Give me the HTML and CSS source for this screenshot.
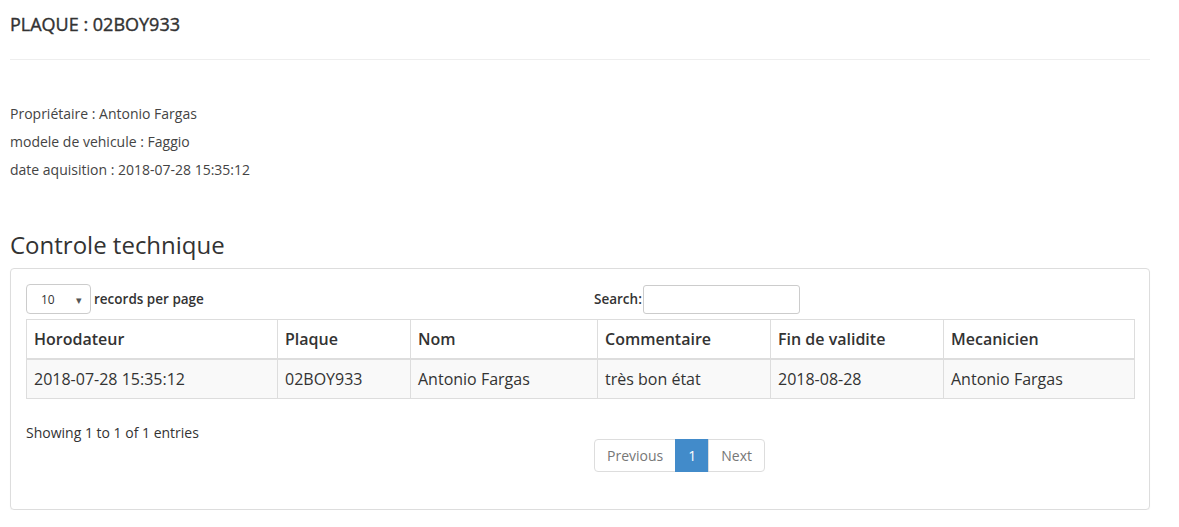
FILE: index.html
```html
<!DOCTYPE html>
<html lang="fr">
<head>
<meta charset="utf-8">
<title>Plaque 02BOY933</title>
<link rel="stylesheet" href="styles.css">
</head>
<body>
<div class="page">
  <h4 class="title">PLAQUE : 02BOY933</h4>
  <hr class="sep">
  <p class="info">Propriétaire : Antonio Fargas</p>
  <p class="info">modele de vehicule : Faggio</p>
  <p class="info">date aquisition : 2018-07-28 15:35:12</p>
  <h3 class="section">Controle technique</h3>
  <div class="panel">
    <div class="grid-row top">
      <div class="col">
        <span class="select">10<span class="caret">▾</span></span>
        <span class="lbl">records per page</span>
      </div>
      <div class="col right">
        <span class="lbl">Search:</span><span class="search"></span>
      </div>
    </div>
    <table class="data">
      <colgroup>
        <col class="c1"><col class="c2"><col class="c3"><col class="c4"><col class="c5"><col class="c6">
      </colgroup>
      <thead>
        <tr><th>Horodateur</th><th>Plaque</th><th>Nom</th><th>Commentaire</th><th>Fin de validite</th><th>Mecanicien</th></tr>
      </thead>
      <tbody>
        <tr><td>2018-07-28 15:35:12</td><td>02BOY933</td><td>Antonio Fargas</td><td>très bon état</td><td>2018-08-28</td><td>Antonio Fargas</td></tr>
      </tbody>
    </table>
    <div class="grid-row bottom">
      <div class="col">
        <div class="showing">Showing 1 to 1 of 1 entries</div>
      </div>
      <div class="col right">
        <ul class="pagination">
          <li class="pg first">Previous</li>
          <li class="pg active">1</li>
          <li class="pg last">Next</li>
        </ul>
      </div>
    </div>
  </div>
</div>
</body>
</html>
```
FILE: styles.css
```css
* { box-sizing: border-box; }
html, body { margin: 0; padding: 0; background: #fff; }
body {
  font-family: "Open Sans", "Liberation Sans", sans-serif;
  color: #333;
  font-size: 14px;
}
.page {
  width: 1150px;
  padding: 0 0 0 10px;
}
.title {
  margin: 14px 0 0;
  font-size: 18px;
  line-height: 20px;
  font-weight: 400;
  -webkit-text-stroke: 0.4px #333;
  color: #333;
}
.sep {
  margin: 25px 0 44px;
  border: 0;
  border-top: 1px solid #eee;
  height: 0;
}
.info {
  margin: 0 0 8px;
  font-size: 14px;
  line-height: 20px;
  color: #444;
}
.section {
  margin: 52px 0 10px;
  font-size: 24px;
  line-height: 26px;
  font-weight: 400;
  color: #333;
}
.panel {
  border: 1px solid #ddd;
  border-radius: 4px;
  padding: 15px 15px 17px;
  box-shadow: 0 1px 1px rgba(0,0,0,0.05);
}
.grid-row {
  display: grid;
  grid-template-columns: 1fr 1fr;
}
.col.right { padding-left: 14px; }
.top .col { display: flex; align-items: center; height: 30px; }
.select {
  display: inline-flex;
  align-items: center;
  justify-content: space-between;
  width: 65px;
  height: 30px;
  border: 1px solid #ccc;
  border-radius: 4px;
  padding: 0 8px 0 14px;
  font-size: 12px;
  color: #333;
  margin-right: 3px;
}
.caret { font-size: 11px; color: #555; }
.lbl { font-weight: 600; font-size: 13.5px; color: #333; }
.search {
  display: inline-block;
  width: 157px;
  height: 29px;
  border: 1px solid #ccc;
  border-radius: 3px;
  margin-left: 1px;
}
.data {
  width: 100%;
  margin: 5px 0 20px;
  border-collapse: collapse;
  border: 1px solid #ddd;
  font-size: 16px;
  table-layout: fixed;
}
.c1 { width: 251px; }
.c2 { width: 133px; }
.c3 { width: 187px; }
.c4 { width: 173px; }
.c5 { width: 173px; }
.c6 { width: 191px; }
.data th, .data td {
  border: 1px solid #ddd;
  padding: 8px 7px;
  line-height: 22px;
  text-align: left;
  color: #333;
}
.data th { font-weight: 600; border-bottom: 2px solid #ddd; }
.data tbody tr { background: #f9f9f9; }
.showing {
  padding-top: 4px;
  font-size: 14px;
  line-height: 20px;
  color: #333;
}
.pagination {
  display: flex;
  margin: 20px 0;
  padding: 0;
  list-style: none;
}
.pg {
  padding: 6px 12px;
  line-height: 19px;
  font-size: 14px;
  color: #777;
  border: 1px solid #ddd;
  margin-left: -1px;
  background: #fff;
}
.pg.first { margin-left: 0; border-radius: 4px 0 0 4px; }
.pg.last { border-radius: 0 4px 4px 0; }
.pg.active { background: #428bca; border-color: #428bca; color: #fff; }
```
